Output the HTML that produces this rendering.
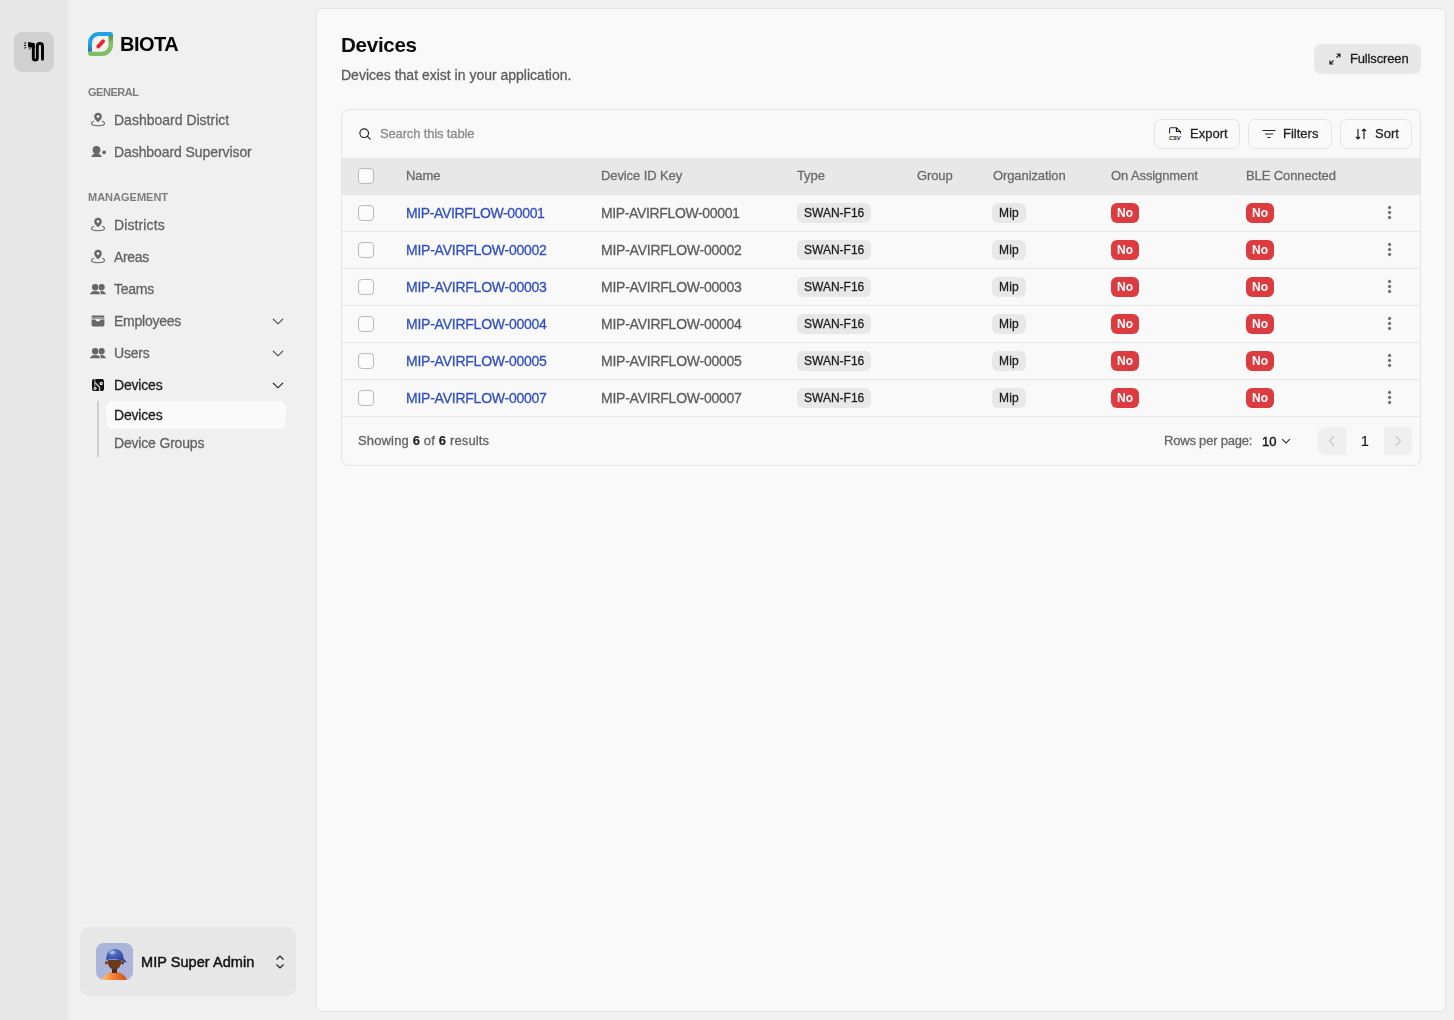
<!DOCTYPE html>
<html><head><meta charset="utf-8"><title>Devices</title>
<style>
*{box-sizing:border-box;margin:0;padding:0}
html,body{width:1454px;height:1020px;overflow:hidden;background:#f0f0f0;font-family:"Liberation Sans",sans-serif;color:#171717}
.t{position:absolute;white-space:nowrap;will-change:transform;-webkit-text-stroke:0.28px currentColor}
.b{-webkit-text-stroke:0}
svg{overflow:visible}
</style></head>
<body>
<div style="position:absolute;left:0px;top:0px;width:68px;height:1020px;background:#e8e8e8"></div>
<div style="position:absolute;left:14px;top:32px;width:40px;height:40px;background:#d1d1d1;border-radius:8px"></div>
<svg style="position:absolute;left:14px;top:32px" width="40" height="40" viewBox="0 0 40 40">
<path d="M19.3 14.5 V25.9 Q19.3 28 21.3 28 Q23.3 28 23.3 25.9 V14 Q23.3 11.5 25.9 11.5 Q28.5 11.5 28.5 14 V27.3" fill="none" stroke="#000" stroke-width="2.9" stroke-linecap="round" stroke-linejoin="round"/>
<path d="M14.1 10.1 L20.8 11.2 L20.8 16.5 L17.6 15.2 L14.2 15.6 Z" fill="#000"/>
<path d="M10.6 11.1 L11.9 11 M10.4 13.4 L11.6 13.4 M10.6 16 L11.9 15.6 M15.4 17.3 L16.8 15.6" stroke="#000" stroke-width="1" stroke-linecap="round"/>
</svg>
<div style="position:absolute;left:68px;top:0px;width:248px;height:1020px;background:#f0f0f0"></div>
<svg style="position:absolute;left:88px;top:32px" width="25" height="24" viewBox="0 0 25 24">
<defs>
<linearGradient id="gb" x1="0" y1="0" x2="0" y2="1"><stop offset="0" stop-color="#20a2de"/><stop offset="0.6" stop-color="#26a1dc"/><stop offset="1" stop-color="#1b72b0"/></linearGradient>
<linearGradient id="gg" x1="0" y1="0" x2="0" y2="1"><stop offset="0" stop-color="#5d8a3a"/><stop offset="0.35" stop-color="#86c067"/><stop offset="1" stop-color="#80bd62"/></linearGradient>
</defs>
<path d="M0 19.8 V11 A11 11 0 0 1 11 0 H22 A3 3 0 0 1 25 3 V4 H11 A7 7 0 0 0 4 11 V19.8 Z" fill="url(#gb)"/>
<path d="M25 4 V13 A11 11 0 0 1 14 24 H3 A3 3 0 0 1 0 21 V19.8 H13.5 A7 7 0 0 0 20.5 12.8 V4 Z" fill="url(#gg)"/>
<line x1="10.2" y1="14.6" x2="15.1" y2="9.2" stroke="#e82228" stroke-width="3.7" stroke-linecap="round"/>
</svg>
<div class="t b" style="left:119.5px;top:34.07px;font-size:20px;line-height:20px;color:#000;font-weight:700;letter-spacing:-0.5px;">BIOTA</div>
<div class="t b" style="left:88px;top:86.69px;font-size:11px;line-height:11px;color:#7d7d7d;font-weight:700;letter-spacing:-0.45px;">GENERAL</div>
<div class="t" style="left:114px;top:113.15px;font-size:14px;line-height:14px;color:#626262;font-weight:400;letter-spacing:0px;">Dashboard District</div>
<div class="t" style="left:114px;top:145.15px;font-size:14px;line-height:14px;color:#626262;font-weight:400;letter-spacing:-0.08px;">Dashboard Supervisor</div>
<div class="t b" style="left:88px;top:191.69px;font-size:11px;line-height:11px;color:#7d7d7d;font-weight:700;letter-spacing:0px;">MANAGEMENT</div>
<div class="t" style="left:114px;top:218.15px;font-size:14px;line-height:14px;color:#626262;font-weight:400;letter-spacing:0.12px;">Districts</div>
<div class="t" style="left:114px;top:250.15px;font-size:14px;line-height:14px;color:#626262;font-weight:400;letter-spacing:-0.34px;">Areas</div>
<div class="t" style="left:114px;top:282.15px;font-size:14px;line-height:14px;color:#626262;font-weight:400;letter-spacing:-0.25px;">Teams</div>
<div class="t" style="left:114px;top:314.15px;font-size:14px;line-height:14px;color:#626262;font-weight:400;letter-spacing:-0.25px;">Employees</div>
<div class="t" style="left:114px;top:346.15px;font-size:14px;line-height:14px;color:#626262;font-weight:400;letter-spacing:-0.2px;">Users</div>
<div class="t" style="left:114px;top:378.15px;font-size:14px;line-height:14px;color:#1b1b1b;font-weight:400;letter-spacing:-0.18px;">Devices</div>
<svg style="position:absolute;left:271px;top:317px" width="14" height="9" viewBox="0 0 14 9"><path d="M2 1.9 L7 6.8 L12 1.9" fill="none" stroke="#404040" stroke-width="1.1"/></svg>
<svg style="position:absolute;left:271px;top:349px" width="14" height="9" viewBox="0 0 14 9"><path d="M2 1.9 L7 6.8 L12 1.9" fill="none" stroke="#404040" stroke-width="1.1"/></svg>
<svg style="position:absolute;left:271px;top:381px" width="14" height="9" viewBox="0 0 14 9"><path d="M2 1.9 L7 6.8 L12 1.9" fill="none" stroke="#151515" stroke-width="1.1"/></svg>
<div style="position:absolute;left:97px;top:401px;width:2px;height:56px;background:#cfcfcf"></div>
<div style="position:absolute;left:106px;top:401px;width:180px;height:28px;background:#fafafa;border-radius:7px"></div>
<div class="t" style="left:114px;top:408.15px;font-size:14px;line-height:14px;color:#1b1b1b;font-weight:400;letter-spacing:-0.18px;">Devices</div>
<div class="t" style="left:114px;top:436.15px;font-size:14px;line-height:14px;color:#626262;font-weight:400;letter-spacing:-0.18px;">Device Groups</div>
<svg style="position:absolute;left:90px;top:111px" width="16" height="16" viewBox="0 0 16 16">
<path d="M8 1.8 C5.8 1.8 4.2 3.4 4.2 5.5 C4.2 7.8 6.3 9.8 8 11.3 C9.7 9.8 11.8 7.8 11.8 5.5 C11.8 3.4 10.2 1.8 8 1.8 Z" fill="#676767"/>
<rect x="6.75" y="4.25" width="2.5" height="2.5" transform="rotate(30 8 5.5)" fill="#f0f0f0"/>
<path d="M3.6 10.2 C2 10.9 1.4 11.6 1.4 12.3 C1.4 13.8 4.4 14.8 8 14.8 C11.6 14.8 14.6 13.8 14.6 12.3 C14.6 11.6 14 10.9 12.4 10.2" fill="none" stroke="#676767" stroke-width="1.1" stroke-linecap="round"/>
</svg>
<svg style="position:absolute;left:90px;top:143px" width="18" height="16" viewBox="0 0 18 16">
<circle cx="6.5" cy="6.8" r="3.9" fill="#676767"/>
<path d="M1 13.9 L3.2 11.3 Q4.4 10 6.5 10 Q8.6 10 9.8 11.3 L12.1 13.9 Z" fill="#676767"/>
<circle cx="14.1" cy="9.3" r="1.9" fill="#676767"/>
</svg>
<svg style="position:absolute;left:90px;top:216px" width="16" height="16" viewBox="0 0 16 16">
<path d="M8 1.8 C5.8 1.8 4.2 3.4 4.2 5.5 C4.2 7.8 6.3 9.8 8 11.3 C9.7 9.8 11.8 7.8 11.8 5.5 C11.8 3.4 10.2 1.8 8 1.8 Z" fill="#676767"/>
<rect x="6.75" y="4.25" width="2.5" height="2.5" transform="rotate(30 8 5.5)" fill="#f0f0f0"/>
<path d="M3.6 10.2 C2 10.9 1.4 11.6 1.4 12.3 C1.4 13.8 4.4 14.8 8 14.8 C11.6 14.8 14.6 13.8 14.6 12.3 C14.6 11.6 14 10.9 12.4 10.2" fill="none" stroke="#676767" stroke-width="1.1" stroke-linecap="round"/>
</svg>
<svg style="position:absolute;left:90px;top:248px" width="16" height="16" viewBox="0 0 16 16">
<path d="M8 1.8 C5.8 1.8 4.2 3.4 4.2 5.5 C4.2 7.8 6.3 9.8 8 11.3 C9.7 9.8 11.8 7.8 11.8 5.5 C11.8 3.4 10.2 1.8 8 1.8 Z" fill="#676767"/>
<rect x="6.75" y="4.25" width="2.5" height="2.5" transform="rotate(30 8 5.5)" fill="#f0f0f0"/>
<path d="M3.6 10.2 C2 10.9 1.4 11.6 1.4 12.3 C1.4 13.8 4.4 14.8 8 14.8 C11.6 14.8 14.6 13.8 14.6 12.3 C14.6 11.6 14 10.9 12.4 10.2" fill="none" stroke="#676767" stroke-width="1.1" stroke-linecap="round"/>
</svg>
<svg style="position:absolute;left:89px;top:282px" width="18" height="14" viewBox="0 0 18 14">
<circle cx="12.6" cy="5.2" r="3.1" fill="#676767"/>
<path d="M9 12.3 L10.6 10 Q11.5 9 12.6 9 Q14.6 9 15.5 10 L17.2 12.3 Z" fill="#676767"/>
<circle cx="6.2" cy="5.3" r="3.9" fill="#f0f0f0"/>
<path d="M-0.3 12.8 L1.6 9.6 Q2.8 8.2 6.2 8.2 Q9.6 8.2 10.8 9.6 L12.7 12.8 Z" fill="#f0f0f0"/>
<circle cx="6.2" cy="5.3" r="3.3" fill="#676767"/>
<path d="M0.8 12.3 L2.4 10 Q3.4 8.9 6.2 8.9 Q9 8.9 10 10 L11.6 12.3 Z" fill="#676767"/>
</svg>
<svg style="position:absolute;left:91px;top:315px" width="14" height="12" viewBox="0 0 14 12">
<rect x="0.6" y="0.6" width="12.8" height="2" rx="1" fill="#676767"/>
<rect x="0.6" y="2.6" width="12.8" height="0.6" fill="#f0f0f0"/>
<rect x="0.6" y="2.5" width="12.8" height="1.1" fill="#676767"/>
<path d="M0.6 4.4 L4.3 4.4 Q5 6.4 7 6.4 Q9 6.4 9.7 4.4 L13.4 4.4 L13.4 10 Q13.4 11.4 12 11.4 L2 11.4 Q0.6 11.4 0.6 10 Z" fill="#676767"/>
</svg>
<svg style="position:absolute;left:89px;top:346px" width="18" height="14" viewBox="0 0 18 14">
<circle cx="12.6" cy="5.2" r="3.1" fill="#676767"/>
<path d="M9 12.3 L10.6 10 Q11.5 9 12.6 9 Q14.6 9 15.5 10 L17.2 12.3 Z" fill="#676767"/>
<circle cx="6.2" cy="5.3" r="3.9" fill="#f0f0f0"/>
<path d="M-0.3 12.8 L1.6 9.6 Q2.8 8.2 6.2 8.2 Q9.6 8.2 10.8 9.6 L12.7 12.8 Z" fill="#f0f0f0"/>
<circle cx="6.2" cy="5.3" r="3.3" fill="#676767"/>
<path d="M0.8 12.3 L2.4 10 Q3.4 8.9 6.2 8.9 Q9 8.9 10 10 L11.6 12.3 Z" fill="#676767"/>
</svg>
<svg style="position:absolute;left:91px;top:378px" width="14" height="14" viewBox="0 0 14 14">
<g transform="translate(1 1)">
<rect x="0" y="0" width="12" height="12" rx="2" fill="#111"/>
<path d="M2.8 0 V7.2" stroke="#f0f0f0" stroke-width="1.2" opacity="0.6"/>
<path d="M3.2 3.8 L7.6 8.2 V12" stroke="#f0f0f0" stroke-width="1.3" fill="none" opacity="0.85"/>
<circle cx="9.2" cy="4.5" r="1.7" fill="#f0f0f0"/><circle cx="9.2" cy="4.5" r="0.55" fill="#111"/>
<path d="M3 7.4 L5 9.3 L3.2 11.2 L1.1 9.4 Z" fill="#f0f0f0"/><circle cx="3" cy="9.3" r="0.5" fill="#111"/>
</g>
</svg>
<div style="position:absolute;left:80px;top:927px;width:216px;height:69px;background:#e7e7e7;border-radius:9px"></div>
<svg style="position:absolute;left:96px;top:943px" width="37" height="37" viewBox="0 0 37 37">
<defs><clipPath id="av"><rect width="37" height="37" rx="8"/></clipPath>
<radialGradient id="cap" cx="0.3" cy="0.25" r="0.9"><stop offset="0" stop-color="#c8d4f4"/><stop offset="0.25" stop-color="#4a66bf"/><stop offset="1" stop-color="#22388a"/></radialGradient>
<linearGradient id="shirt" x1="0" y1="0" x2="1" y2="0"><stop offset="0" stop-color="#ffc06a"/><stop offset="0.5" stop-color="#f47a34"/><stop offset="1" stop-color="#c4541d"/></linearGradient></defs>
<g clip-path="url(#av)">
<rect width="37" height="37" fill="#abb5d9"/>
<path d="M6 37 Q9 29 18.5 29 Q28 29 31 37 Z" fill="url(#shirt)"/>
<rect x="16" y="25" width="5" height="5" fill="#4a2a16"/>
<ellipse cx="10.4" cy="19.8" rx="1.6" ry="1.8" fill="#7d4a28"/>
<ellipse cx="26.6" cy="19.8" rx="1.6" ry="1.8" fill="#6d3e20"/>
<path d="M11.7 17 Q11.7 26.5 18.5 26.5 Q25.3 26.5 25.3 17 Z" fill="#6b3a1c"/>
<path d="M10 17 Q10 6 19 6 Q27.5 6.5 27.5 15.5 L31 19.5 Q29 19.5 26 17.5 Q18 15.5 10 17 Z" fill="url(#cap)"/>
</g></svg>
<div class="t" style="left:140.8px;top:954.73px;font-size:14.5px;line-height:14.5px;color:#111;font-weight:400;letter-spacing:0.05px;-webkit-text-stroke:0.45px #111">MIP Super Admin</div>
<svg style="position:absolute;left:274px;top:954px" width="12" height="16" viewBox="0 0 12 16"><path d="M2.5 5.5 L6 2 L9.5 5.5 M2.5 10.5 L6 14 L9.5 10.5" fill="none" stroke="#222" stroke-width="1.2"/></svg>
<div style="position:absolute;left:316px;top:8px;width:1130px;height:1004px;background:#f9f9f9;border:1px solid #e4e4e4;border-radius:6px;box-sizing:border-box"></div>
<div class="t b" style="left:341.3px;top:34.76px;font-size:20.6px;line-height:20.6px;color:#0c0c0c;font-weight:700;letter-spacing:-0.3px;">Devices</div>
<div class="t" style="left:341px;top:68.15px;font-size:14px;line-height:14px;color:#5c5c5c;font-weight:400;letter-spacing:0px;">Devices that exist in your application.</div>
<div style="position:absolute;left:1314px;top:44px;width:107px;height:30px;background:#e8e8e8;border-radius:7px"></div>
<svg style="position:absolute;left:1328px;top:52px" width="14" height="14" viewBox="0 0 14 14"><path d="M2 12 L5.6 8.4 M8.4 5.6 L12 2 M8.6 2 L12 2 L12 5.4 M2 8.6 L2 12 L5.4 12" fill="none" stroke="#1e1e1e" stroke-width="1.2"/></svg>
<div class="t" style="left:1349.5px;top:52.00px;font-size:13px;line-height:13px;color:#1a1a1a;font-weight:400;letter-spacing:-0.15px;">Fullscreen</div>
<div style="position:absolute;left:341px;top:109px;width:1080px;height:357px;border:1px solid #e5e5e5;border-radius:8px;box-sizing:border-box"></div>
<svg style="position:absolute;left:358px;top:127px" width="14" height="14" viewBox="0 0 14 14"><circle cx="6.2" cy="6.2" r="4.3" fill="none" stroke="#1e1e1e" stroke-width="1.15"/><path d="M9.4 9.4 L12.2 12.2" stroke="#1e1e1e" stroke-width="1.15" stroke-linecap="round"/></svg>
<div class="t" style="left:380px;top:127.00px;font-size:13px;line-height:13px;color:#8a8a8a;font-weight:400;letter-spacing:-0.15px;">Search this table</div>
<div style="position:absolute;left:1154px;top:119px;width:86px;height:30px;background:#fafafa;border:1px solid #e4e4e4;border-radius:7px;box-sizing:border-box"></div>
<div class="t" style="left:1190px;top:126.60px;font-size:13px;line-height:13px;color:#1f1f1f;font-weight:400;letter-spacing:0px;">Export</div>
<div style="position:absolute;left:1248px;top:119px;width:84px;height:30px;background:#fafafa;border:1px solid #e4e4e4;border-radius:7px;box-sizing:border-box"></div>
<div class="t" style="left:1283px;top:126.60px;font-size:13px;line-height:13px;color:#1f1f1f;font-weight:400;letter-spacing:0px;">Filters</div>
<div style="position:absolute;left:1340px;top:119px;width:72px;height:30px;background:#fafafa;border:1px solid #e4e4e4;border-radius:7px;box-sizing:border-box"></div>
<div class="t" style="left:1375px;top:126.60px;font-size:13px;line-height:13px;color:#1f1f1f;font-weight:400;letter-spacing:0px;">Sort</div>
<svg style="position:absolute;left:1168px;top:127px" width="14" height="14" viewBox="0 0 14 14">
<path d="M1.6 6.4 V1.9 Q1.6 0.7 2.8 0.7 H8.5 L12.5 4.7 V6.4" fill="none" stroke="#222" stroke-width="1.05"/>
<path d="M8.5 0.9 V4.5 H12.3" fill="none" stroke="#111" stroke-width="1.2"/>
<text x="1" y="12.6" font-family="Liberation Sans" font-size="5.6" font-weight="700" textLength="11.6" lengthAdjust="spacingAndGlyphs" fill="#222" font-style="italic">CSV</text>
</svg>
<svg style="position:absolute;left:1261px;top:127px" width="16" height="14" viewBox="0 0 16 14"><path d="M1.5 3.5 H14.5 M4 7 H12 M6.5 10.5 H9.5" stroke="#222" stroke-width="1.2"/></svg>
<svg style="position:absolute;left:1354px;top:127px" width="14" height="14" viewBox="0 0 14 14"><path d="M4 2 V12 M1.8 9.8 L4 12 L6.2 9.8 M10 12 V2 M7.8 4.2 L10 2 L12.2 4.2" fill="none" stroke="#222" stroke-width="1.2"/></svg>
<div style="position:absolute;left:342px;top:158px;width:1078px;height:37px;background:#e8e8e8"></div>
<div style="position:absolute;left:358px;top:168px;width:16px;height:16px;background:#fcfcfc;border:1px solid #b9b9b9;border-radius:4px;box-sizing:border-box"></div>
<div class="t" style="left:406px;top:168.60px;font-size:13px;line-height:13px;color:#6a6a6a;font-weight:400;letter-spacing:-0.1px;">Name</div>
<div class="t" style="left:601px;top:168.60px;font-size:13px;line-height:13px;color:#6a6a6a;font-weight:400;letter-spacing:-0.1px;">Device ID Key</div>
<div class="t" style="left:797px;top:168.60px;font-size:13px;line-height:13px;color:#6a6a6a;font-weight:400;letter-spacing:-0.1px;">Type</div>
<div class="t" style="left:917px;top:168.60px;font-size:13px;line-height:13px;color:#6a6a6a;font-weight:400;letter-spacing:-0.1px;">Group</div>
<div class="t" style="left:993px;top:168.60px;font-size:13px;line-height:13px;color:#6a6a6a;font-weight:400;letter-spacing:-0.1px;">Organization</div>
<div class="t" style="left:1111px;top:168.60px;font-size:13px;line-height:13px;color:#6a6a6a;font-weight:400;letter-spacing:-0.1px;">On Assignment</div>
<div class="t" style="left:1246px;top:168.60px;font-size:13px;line-height:13px;color:#6a6a6a;font-weight:400;letter-spacing:-0.1px;">BLE Connected</div>
<div style="position:absolute;left:358px;top:205px;width:16px;height:16px;background:#fcfcfc;border:1px solid #b9b9b9;border-radius:4px;box-sizing:border-box"></div>
<div class="t" style="left:406px;top:206.15px;font-size:14px;line-height:14px;color:#2f4fc5;font-weight:400;letter-spacing:-0.36px;">MIP-AVIRFLOW-00001</div>
<div class="t" style="left:601px;top:206.15px;font-size:14px;line-height:14px;color:#5b5b5b;font-weight:400;letter-spacing:-0.36px;">MIP-AVIRFLOW-00001</div>
<div style="position:absolute;left:797px;top:203px;width:74px;height:20px;background:#e8e8e8;border-radius:6px"></div>
<div class="t" style="left:804px;top:206.84px;font-size:12px;line-height:12px;color:#1c1c1c;font-weight:400;letter-spacing:0px;">SWAN-F16</div>
<div style="position:absolute;left:992px;top:203px;width:34px;height:20px;background:#e8e8e8;border-radius:6px"></div>
<div class="t" style="left:998.5px;top:206.84px;font-size:12px;line-height:12px;color:#1c1c1c;font-weight:400;letter-spacing:0.2px;">Mip</div>
<div style="position:absolute;left:1111px;top:203px;width:28px;height:20px;background:#dc3b40;border-radius:6px"></div>
<div class="t b" style="left:1117px;top:206.84px;font-size:12px;line-height:12px;color:#fff;font-weight:700;letter-spacing:0px;">No</div>
<div style="position:absolute;left:1246px;top:203px;width:28px;height:20px;background:#dc3b40;border-radius:6px"></div>
<div class="t b" style="left:1252px;top:206.84px;font-size:12px;line-height:12px;color:#fff;font-weight:700;letter-spacing:0px;">No</div>
<div style="position:absolute;left:1388.3px;top:206.4px;width:3.3px;height:3.3px;background:#707070;border-radius:0.8px;transform:rotate(25deg)"></div>
<div style="position:absolute;left:1388.3px;top:211.4px;width:3.3px;height:3.3px;background:#707070;border-radius:0.8px;transform:rotate(25deg)"></div>
<div style="position:absolute;left:1388.3px;top:216.4px;width:3.3px;height:3.3px;background:#707070;border-radius:0.8px;transform:rotate(25deg)"></div>
<div style="position:absolute;left:342px;top:231px;width:1078px;height:1px;background:#e6e6e6"></div>
<div style="position:absolute;left:358px;top:242px;width:16px;height:16px;background:#fcfcfc;border:1px solid #b9b9b9;border-radius:4px;box-sizing:border-box"></div>
<div class="t" style="left:406px;top:243.15px;font-size:14px;line-height:14px;color:#2f4fc5;font-weight:400;letter-spacing:-0.24px;">MIP-AVIRFLOW-00002</div>
<div class="t" style="left:601px;top:243.15px;font-size:14px;line-height:14px;color:#5b5b5b;font-weight:400;letter-spacing:-0.24px;">MIP-AVIRFLOW-00002</div>
<div style="position:absolute;left:797px;top:240px;width:74px;height:20px;background:#e8e8e8;border-radius:6px"></div>
<div class="t" style="left:804px;top:243.84px;font-size:12px;line-height:12px;color:#1c1c1c;font-weight:400;letter-spacing:0px;">SWAN-F16</div>
<div style="position:absolute;left:992px;top:240px;width:34px;height:20px;background:#e8e8e8;border-radius:6px"></div>
<div class="t" style="left:998.5px;top:243.84px;font-size:12px;line-height:12px;color:#1c1c1c;font-weight:400;letter-spacing:0.2px;">Mip</div>
<div style="position:absolute;left:1111px;top:240px;width:28px;height:20px;background:#dc3b40;border-radius:6px"></div>
<div class="t b" style="left:1117px;top:243.84px;font-size:12px;line-height:12px;color:#fff;font-weight:700;letter-spacing:0px;">No</div>
<div style="position:absolute;left:1246px;top:240px;width:28px;height:20px;background:#dc3b40;border-radius:6px"></div>
<div class="t b" style="left:1252px;top:243.84px;font-size:12px;line-height:12px;color:#fff;font-weight:700;letter-spacing:0px;">No</div>
<div style="position:absolute;left:1388.3px;top:243.4px;width:3.3px;height:3.3px;background:#707070;border-radius:0.8px;transform:rotate(25deg)"></div>
<div style="position:absolute;left:1388.3px;top:248.4px;width:3.3px;height:3.3px;background:#707070;border-radius:0.8px;transform:rotate(25deg)"></div>
<div style="position:absolute;left:1388.3px;top:253.4px;width:3.3px;height:3.3px;background:#707070;border-radius:0.8px;transform:rotate(25deg)"></div>
<div style="position:absolute;left:342px;top:268px;width:1078px;height:1px;background:#e6e6e6"></div>
<div style="position:absolute;left:358px;top:279px;width:16px;height:16px;background:#fcfcfc;border:1px solid #b9b9b9;border-radius:4px;box-sizing:border-box"></div>
<div class="t" style="left:406px;top:280.15px;font-size:14px;line-height:14px;color:#2f4fc5;font-weight:400;letter-spacing:-0.24px;">MIP-AVIRFLOW-00003</div>
<div class="t" style="left:601px;top:280.15px;font-size:14px;line-height:14px;color:#5b5b5b;font-weight:400;letter-spacing:-0.24px;">MIP-AVIRFLOW-00003</div>
<div style="position:absolute;left:797px;top:277px;width:74px;height:20px;background:#e8e8e8;border-radius:6px"></div>
<div class="t" style="left:804px;top:280.84px;font-size:12px;line-height:12px;color:#1c1c1c;font-weight:400;letter-spacing:0px;">SWAN-F16</div>
<div style="position:absolute;left:992px;top:277px;width:34px;height:20px;background:#e8e8e8;border-radius:6px"></div>
<div class="t" style="left:998.5px;top:280.84px;font-size:12px;line-height:12px;color:#1c1c1c;font-weight:400;letter-spacing:0.2px;">Mip</div>
<div style="position:absolute;left:1111px;top:277px;width:28px;height:20px;background:#dc3b40;border-radius:6px"></div>
<div class="t b" style="left:1117px;top:280.84px;font-size:12px;line-height:12px;color:#fff;font-weight:700;letter-spacing:0px;">No</div>
<div style="position:absolute;left:1246px;top:277px;width:28px;height:20px;background:#dc3b40;border-radius:6px"></div>
<div class="t b" style="left:1252px;top:280.84px;font-size:12px;line-height:12px;color:#fff;font-weight:700;letter-spacing:0px;">No</div>
<div style="position:absolute;left:1388.3px;top:280.4px;width:3.3px;height:3.3px;background:#707070;border-radius:0.8px;transform:rotate(25deg)"></div>
<div style="position:absolute;left:1388.3px;top:285.4px;width:3.3px;height:3.3px;background:#707070;border-radius:0.8px;transform:rotate(25deg)"></div>
<div style="position:absolute;left:1388.3px;top:290.4px;width:3.3px;height:3.3px;background:#707070;border-radius:0.8px;transform:rotate(25deg)"></div>
<div style="position:absolute;left:342px;top:305px;width:1078px;height:1px;background:#e6e6e6"></div>
<div style="position:absolute;left:358px;top:316px;width:16px;height:16px;background:#fcfcfc;border:1px solid #b9b9b9;border-radius:4px;box-sizing:border-box"></div>
<div class="t" style="left:406px;top:317.15px;font-size:14px;line-height:14px;color:#2f4fc5;font-weight:400;letter-spacing:-0.24px;">MIP-AVIRFLOW-00004</div>
<div class="t" style="left:601px;top:317.15px;font-size:14px;line-height:14px;color:#5b5b5b;font-weight:400;letter-spacing:-0.24px;">MIP-AVIRFLOW-00004</div>
<div style="position:absolute;left:797px;top:314px;width:74px;height:20px;background:#e8e8e8;border-radius:6px"></div>
<div class="t" style="left:804px;top:317.84px;font-size:12px;line-height:12px;color:#1c1c1c;font-weight:400;letter-spacing:0px;">SWAN-F16</div>
<div style="position:absolute;left:992px;top:314px;width:34px;height:20px;background:#e8e8e8;border-radius:6px"></div>
<div class="t" style="left:998.5px;top:317.84px;font-size:12px;line-height:12px;color:#1c1c1c;font-weight:400;letter-spacing:0.2px;">Mip</div>
<div style="position:absolute;left:1111px;top:314px;width:28px;height:20px;background:#dc3b40;border-radius:6px"></div>
<div class="t b" style="left:1117px;top:317.84px;font-size:12px;line-height:12px;color:#fff;font-weight:700;letter-spacing:0px;">No</div>
<div style="position:absolute;left:1246px;top:314px;width:28px;height:20px;background:#dc3b40;border-radius:6px"></div>
<div class="t b" style="left:1252px;top:317.84px;font-size:12px;line-height:12px;color:#fff;font-weight:700;letter-spacing:0px;">No</div>
<div style="position:absolute;left:1388.3px;top:317.4px;width:3.3px;height:3.3px;background:#707070;border-radius:0.8px;transform:rotate(25deg)"></div>
<div style="position:absolute;left:1388.3px;top:322.4px;width:3.3px;height:3.3px;background:#707070;border-radius:0.8px;transform:rotate(25deg)"></div>
<div style="position:absolute;left:1388.3px;top:327.4px;width:3.3px;height:3.3px;background:#707070;border-radius:0.8px;transform:rotate(25deg)"></div>
<div style="position:absolute;left:342px;top:342px;width:1078px;height:1px;background:#e6e6e6"></div>
<div style="position:absolute;left:358px;top:353px;width:16px;height:16px;background:#fcfcfc;border:1px solid #b9b9b9;border-radius:4px;box-sizing:border-box"></div>
<div class="t" style="left:406px;top:354.15px;font-size:14px;line-height:14px;color:#2f4fc5;font-weight:400;letter-spacing:-0.24px;">MIP-AVIRFLOW-00005</div>
<div class="t" style="left:601px;top:354.15px;font-size:14px;line-height:14px;color:#5b5b5b;font-weight:400;letter-spacing:-0.24px;">MIP-AVIRFLOW-00005</div>
<div style="position:absolute;left:797px;top:351px;width:74px;height:20px;background:#e8e8e8;border-radius:6px"></div>
<div class="t" style="left:804px;top:354.84px;font-size:12px;line-height:12px;color:#1c1c1c;font-weight:400;letter-spacing:0px;">SWAN-F16</div>
<div style="position:absolute;left:992px;top:351px;width:34px;height:20px;background:#e8e8e8;border-radius:6px"></div>
<div class="t" style="left:998.5px;top:354.84px;font-size:12px;line-height:12px;color:#1c1c1c;font-weight:400;letter-spacing:0.2px;">Mip</div>
<div style="position:absolute;left:1111px;top:351px;width:28px;height:20px;background:#dc3b40;border-radius:6px"></div>
<div class="t b" style="left:1117px;top:354.84px;font-size:12px;line-height:12px;color:#fff;font-weight:700;letter-spacing:0px;">No</div>
<div style="position:absolute;left:1246px;top:351px;width:28px;height:20px;background:#dc3b40;border-radius:6px"></div>
<div class="t b" style="left:1252px;top:354.84px;font-size:12px;line-height:12px;color:#fff;font-weight:700;letter-spacing:0px;">No</div>
<div style="position:absolute;left:1388.3px;top:354.4px;width:3.3px;height:3.3px;background:#707070;border-radius:0.8px;transform:rotate(25deg)"></div>
<div style="position:absolute;left:1388.3px;top:359.4px;width:3.3px;height:3.3px;background:#707070;border-radius:0.8px;transform:rotate(25deg)"></div>
<div style="position:absolute;left:1388.3px;top:364.4px;width:3.3px;height:3.3px;background:#707070;border-radius:0.8px;transform:rotate(25deg)"></div>
<div style="position:absolute;left:342px;top:379px;width:1078px;height:1px;background:#e6e6e6"></div>
<div style="position:absolute;left:358px;top:390px;width:16px;height:16px;background:#fcfcfc;border:1px solid #b9b9b9;border-radius:4px;box-sizing:border-box"></div>
<div class="t" style="left:406px;top:391.15px;font-size:14px;line-height:14px;color:#2f4fc5;font-weight:400;letter-spacing:-0.24px;">MIP-AVIRFLOW-00007</div>
<div class="t" style="left:601px;top:391.15px;font-size:14px;line-height:14px;color:#5b5b5b;font-weight:400;letter-spacing:-0.24px;">MIP-AVIRFLOW-00007</div>
<div style="position:absolute;left:797px;top:388px;width:74px;height:20px;background:#e8e8e8;border-radius:6px"></div>
<div class="t" style="left:804px;top:391.84px;font-size:12px;line-height:12px;color:#1c1c1c;font-weight:400;letter-spacing:0px;">SWAN-F16</div>
<div style="position:absolute;left:992px;top:388px;width:34px;height:20px;background:#e8e8e8;border-radius:6px"></div>
<div class="t" style="left:998.5px;top:391.84px;font-size:12px;line-height:12px;color:#1c1c1c;font-weight:400;letter-spacing:0.2px;">Mip</div>
<div style="position:absolute;left:1111px;top:388px;width:28px;height:20px;background:#dc3b40;border-radius:6px"></div>
<div class="t b" style="left:1117px;top:391.84px;font-size:12px;line-height:12px;color:#fff;font-weight:700;letter-spacing:0px;">No</div>
<div style="position:absolute;left:1246px;top:388px;width:28px;height:20px;background:#dc3b40;border-radius:6px"></div>
<div class="t b" style="left:1252px;top:391.84px;font-size:12px;line-height:12px;color:#fff;font-weight:700;letter-spacing:0px;">No</div>
<div style="position:absolute;left:1388.3px;top:391.4px;width:3.3px;height:3.3px;background:#707070;border-radius:0.8px;transform:rotate(25deg)"></div>
<div style="position:absolute;left:1388.3px;top:396.4px;width:3.3px;height:3.3px;background:#707070;border-radius:0.8px;transform:rotate(25deg)"></div>
<div style="position:absolute;left:1388.3px;top:401.4px;width:3.3px;height:3.3px;background:#707070;border-radius:0.8px;transform:rotate(25deg)"></div>
<div style="position:absolute;left:342px;top:416px;width:1078px;height:1px;background:#e6e6e6"></div>
<div class="t" style="left:358px;top:434.00px;font-size:13px;line-height:13px;color:#616161;letter-spacing:0.15px">Showing <b style="color:#1a1a1a;-webkit-text-stroke:0.1px #1a1a1a">6</b> of <b style="color:#1a1a1a;-webkit-text-stroke:0.1px #1a1a1a">6</b> results</div>
<div class="t" style="left:1164px;top:434.00px;font-size:13px;line-height:13px;color:#646464;font-weight:400;letter-spacing:-0.2px;">Rows per page:</div>
<div class="t" style="left:1262px;top:434.50px;font-size:13px;line-height:13px;color:#151515;font-weight:400;letter-spacing:0.1px;-webkit-text-stroke:0.4px #151515">10</div>
<svg style="position:absolute;left:1280px;top:436px" width="12" height="10" viewBox="0 0 12 10"><path d="M2.2 3.2 L6 7 L9.8 3.2" fill="none" stroke="#222" stroke-width="1.05"/></svg>
<div style="position:absolute;left:1318px;top:427px;width:28px;height:28px;background:#efefef;border-radius:7px 0 0 7px"></div>
<div style="position:absolute;left:1384px;top:427px;width:28px;height:28px;background:#efefef;border-radius:0 7px 7px 0"></div>
<svg style="position:absolute;left:1326px;top:435px" width="12" height="12" viewBox="0 0 12 12"><path d="M8 1.5 L3.5 6 L8 10.5" fill="none" stroke="#c4c4c4" stroke-width="1.1"/></svg>
<svg style="position:absolute;left:1392px;top:435px" width="12" height="12" viewBox="0 0 12 12"><path d="M4 1.5 L8.5 6 L4 10.5" fill="none" stroke="#c4c4c4" stroke-width="1.1"/></svg>
<div class="t" style="left:1361px;top:434.15px;font-size:14px;line-height:14px;color:#151515;font-weight:400;letter-spacing:0px;-webkit-text-stroke:0.2px #151515">1</div>
</body></html>
